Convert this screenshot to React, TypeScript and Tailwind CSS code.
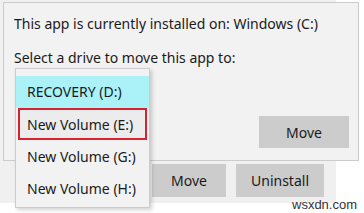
import React from "react";

const drives = ["RECOVERY (D:)", "New Volume (E:)", "New Volume (G:)", "New Volume (H:)"];

function DriveList(): JSX.Element {
  return (
    <div className="absolute left-[15px] top-[68px] w-[135px] border border-[#cccccc] bg-[#f2f2f2] pt-[7px] pb-[3px] shadow-[2px_2px_4px_rgba(0,0,0,0.18)]">
      {drives.map((d, i) => {
        if (i === 0) {
          return (
            <div key={d} className="flex h-[32px] items-center bg-[#aaf2f7] pl-[11px] pb-[2px]">
              {d}
            </div>
          );
        }
        if (i === 1) {
          return (
            <div key={d} className="h-[32px] px-[2px]">
              <div className="flex h-full items-center border-2 border-[#d8222f] bg-[#ececec] pl-[7px]">
                {d}
              </div>
            </div>
          );
        }
        return (
          <div key={d} className="flex h-[32px] items-center pl-[11px]">
            {d}
          </div>
        );
      })}
    </div>
  );
}

export default function App(): JSX.Element {
  return (
    <div className="relative h-[213px] w-[364px] overflow-hidden bg-white font-['Noto_Sans',sans-serif] text-[14px] text-[#1a1a1a]">
      {/* window underneath */}
      <div className="h-[203px] w-[336px] bg-[#f0f0f0] pt-[164px]">
        <div className="flex gap-[10px] pl-[152px]">
          <button className="h-[33px] w-[74px] bg-[#cccccc]">Move</button>
          <button className="h-[33px] w-[88px] bg-[#cccccc]">Uninstall</button>
        </div>
      </div>
      <div className="absolute left-[292px] top-[198px] text-[13px] leading-[14px] text-[#333] font-['Liberation_Sans',sans-serif]">
        wsxdn.com
      </div>

      {/* move flyout */}
      <div className="absolute left-[3px] top-[2px] flex h-[159px] w-[356px] flex-col border border-[#cccccc] bg-[#f2f2f2] pl-[10px]">
        <p className="mt-[11px] leading-[20px]">This app is currently installed on: Windows (C:)</p>
        <p className="mt-[14px] leading-[20px]">Select a drive to move this app to:</p>
        <div className="mt-auto mb-[12px] mr-[9px] flex justify-end">
          <button className="h-[32px] w-[90px] bg-[#cccccc]">Move</button>
        </div>
      </div>

      <DriveList />
    </div>
  );
}
